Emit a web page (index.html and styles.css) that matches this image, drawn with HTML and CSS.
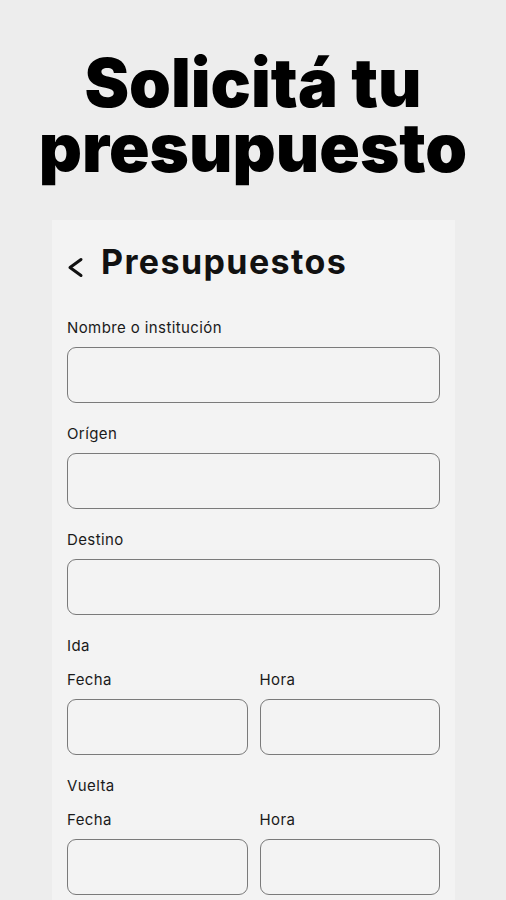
FILE: index.html
```html
<!DOCTYPE html>
<html lang="es">
<head>
<meta charset="UTF-8">
<title>Solicitá tu presupuesto</title>
<link rel="stylesheet" href="styles.css">
</head>
<body>
<h1 class="hero">Solicitá tu<br>presupuesto</h1>
<div class="card">
    <div class="card-head">
        <svg class="back" width="17" height="22" viewBox="0 0 17 22"><path d="M14 3.5 L3 11.5 L14 19.5" fill="none" stroke="#111" stroke-width="3" stroke-linecap="round" stroke-linejoin="round"/></svg>
        <h2>Presupuestos</h2>
    </div>
    <form class="form">
        <div class="field">
            <label>Nombre o institución</label>
            <div class="input"></div>
        </div>
        <div class="field">
            <label>Orígen</label>
            <div class="input"></div>
        </div>
        <div class="field">
            <label>Destino</label>
            <div class="input"></div>
        </div>
        <div class="group">
            <p class="group-title">Ida</p>
            <div class="pair">
                <div class="field"><label>Fecha</label><div class="input"></div></div>
                <div class="field"><label>Hora</label><div class="input"></div></div>
            </div>
        </div>
        <div class="group">
            <p class="group-title">Vuelta</p>
            <div class="pair">
                <div class="field"><label>Fecha</label><div class="input"></div></div>
                <div class="field"><label>Hora</label><div class="input"></div></div>
            </div>
        </div>
    </form>
</div>
</body>
</html>
```
FILE: styles.css
```css
body { margin: 0; background: #ededed; font-family: Inter, "Noto Sans", sans-serif; color: #111; height: 900px; overflow: hidden; }
.hero { margin: 0; padding-top: 50px; text-align: center; font-size: 67px; line-height: 65px; font-weight: 900; color: #000; }
.card { margin: 40px 51px 0 52px; background: #f3f3f3; padding: 18px 15px 5px 15px; }
.card-head { display: flex; align-items: flex-start; gap: 17px; height: 48px; }
.back { display: block; margin-top: 18px; }
.card-head h2 { margin: 0; font-size: 34px; font-weight: 700; line-height: 48px; letter-spacing: 1.4px; }
.form { display: flex; flex-direction: column; gap: 21px; margin-top: 32px; }
.field { display: flex; flex-direction: column; gap: 9px; }
.field label, .group-title { font-size: 15px; line-height: 20px; letter-spacing: 0.4px; color: #1a1a1a; }
.group-title { margin: 0 0 14px 0; }
.input { box-sizing: border-box; height: 56px; border: 1.5px solid #7a7a7a; border-radius: 9px; }
.pair { display: grid; grid-template-columns: 1fr 1fr; gap: 12px; }
```
